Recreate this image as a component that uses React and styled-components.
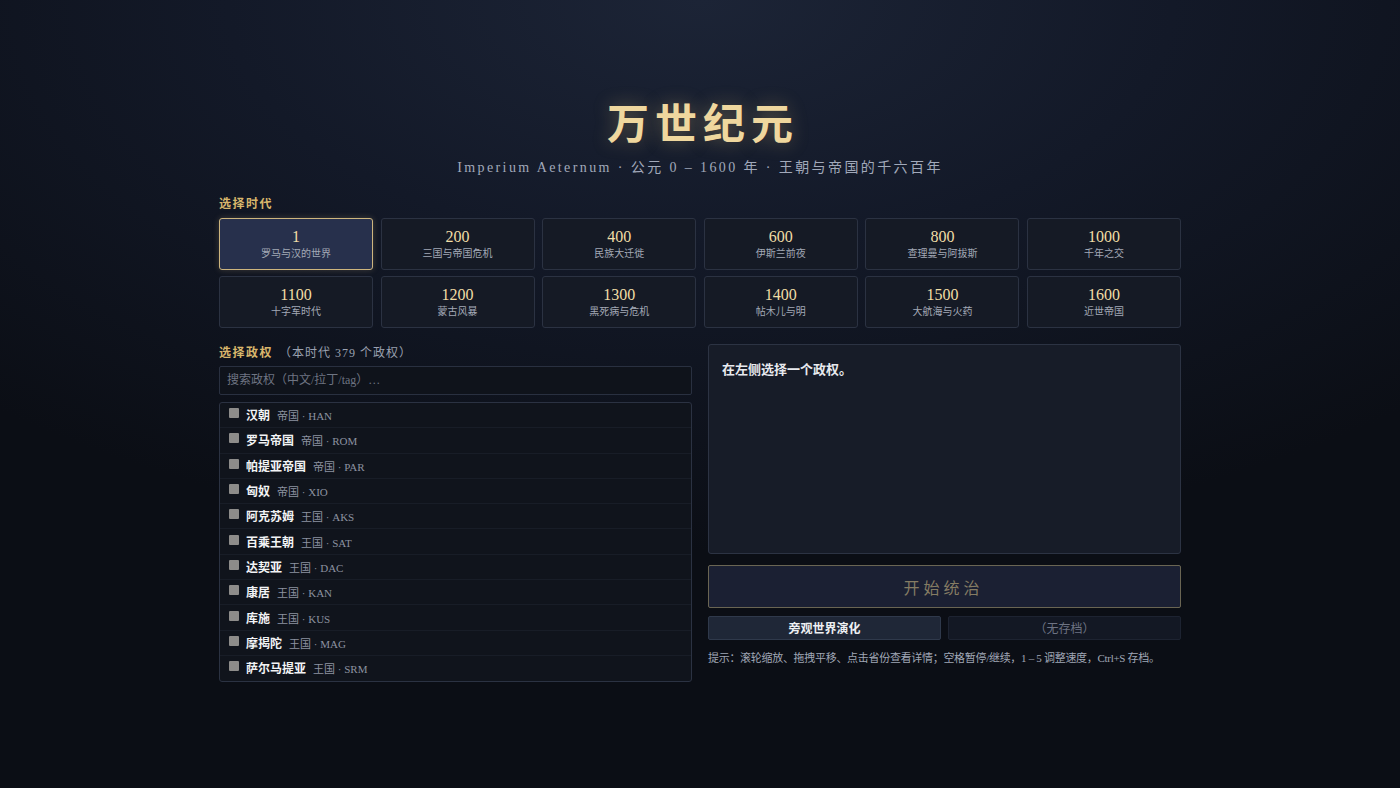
import React, { useState } from 'react';
import styled, { createGlobalStyle } from 'styled-components';

const GlobalStyle = createGlobalStyle`
  html, body {
    margin: 0;
    padding: 0;
    background: #0b0e15;
  }
  body {
    font-family: "Liberation Serif", "Noto Sans CJK SC", serif;
    color: #e6e8ee;
  }
  * {
    box-sizing: border-box;
  }
`;

const Page = styled.div`
  min-height: 788px;
  background: radial-gradient(ellipse 75% 70% at 50% 0%, #1c2436 0%, #131928 45%, #0b0e15 100%);
  display: flex;
  justify-content: center;
  padding-top: 100px;
`;

const Main = styled.div`
  width: 962px;
  display: flex;
  flex-direction: column;
`;

const Header = styled.header`
  text-align: center;
  margin-bottom: 18px;
`;

const Title = styled.h1`
  margin: 0;
  font-size: 42px;
  line-height: 50px;
  font-weight: 700;
  letter-spacing: 6px;
  padding-left: 6px;
  color: #efd79e;
  text-shadow: 0 0 18px rgba(236, 200, 120, 0.35);
`;

const Subtitle = styled.p`
  margin: 8px 0 0;
  font-size: 14px;
  line-height: 20px;
  letter-spacing: 2.4px;
  color: #a1a9ba;
`;

const SectionLabel = styled.div`
  font-size: 12px;
  line-height: 16px;
  letter-spacing: 1.5px;
  color: #d8b66c;
  font-weight: 700;
  margin-bottom: ${(p) => p.$gap || '6px'};
`;

const Muted = styled.span`
  color: #9aa1b0;
  font-weight: 400;
  margin-left: 6px;
  letter-spacing: 1px;
`;

const EraGrid = styled.div`
  display: grid;
  grid-template-columns: repeat(6, 1fr);
  gap: 6px 7.6px;
  margin-bottom: 16px;
`;

const EraCard = styled.button`
  height: 52px;
  border-radius: 3px;
  border: 1px solid ${(p) => (p.$active ? '#cdb57e' : '#2b3242')};
  background: ${(p) => (p.$active ? '#27304c' : '#151a25')};
  display: flex;
  flex-direction: column;
  align-items: center;
  justify-content: center;
  font-family: inherit;
  cursor: pointer;
  padding: 0;
  box-shadow: ${(p) => (p.$active ? '0 0 6px rgba(205,181,126,0.25)' : 'none')};
`;

const EraYear = styled.span`
  font-size: 16px;
  line-height: 19px;
  color: #f1dea6;
`;

const EraName = styled.span`
  font-size: 10px;
  line-height: 14px;
  color: #a3a9b6;
  margin-top: 1px;
`;

const Columns = styled.div`
  display: grid;
  grid-template-columns: 473px 473px;
  gap: 16px;
  align-items: start;
`;

const LeftCol = styled.div`
  display: flex;
  flex-direction: column;
  padding-top: 1px;
`;

const SearchInput = styled.input`
  height: 29px;
  width: 100%;
  background: #0f131b;
  border: 1px solid #293040;
  border-radius: 2px;
  padding: 0 7px;
  font-family: inherit;
  font-size: 12px;
  color: #d0d4dc;
  margin-bottom: 7px;
  outline: none;
  &::placeholder {
    color: #6e7482;
  }
`;

const List = styled.div`
  border: 1px solid #2b3242;
  border-radius: 3px;
  background: #10141c;
  overflow: hidden;
`;

const Row = styled.div`
  height: 25.3px;
  display: flex;
  align-items: center;
  padding-left: 9px;
  border-bottom: 1px solid ${(p) => (p.$last ? 'transparent' : '#181d27')};
`;

const Check = styled.span`
  width: 10px;
  height: 10px;
  background: #8d8c8a;
  border-radius: 1px;
  margin-right: 7px;
  margin-top: -4px;
`;

const PolityName = styled.span`
  font-size: 12px;
  font-weight: 700;
  color: #f2f3f5;
  margin-right: 7px;
`;

const PolityMeta = styled.span`
  font-size: 11px;
  color: #8c92a0;
`;

const RightCol = styled.div`
  display: flex;
  flex-direction: column;
`;

const DetailPanel = styled.div`
  height: 210px;
  background: #171c28;
  border: 1px solid #2c3343;
  border-radius: 3px;
  padding: 14px 13px;
  font-size: 13px;
  font-weight: 700;
  color: #e8eaef;
  margin-bottom: 11px;
`;

const StartButton = styled.button`
  height: 43px;
  background: #1b2033;
  border: 1px solid #6a6553;
  border-radius: 2px;
  font-family: inherit;
  font-size: 16px;
  letter-spacing: 4px;
  padding-left: 4px;
  color: #857c63;
  margin-bottom: 8px;
`;

const ButtonRow = styled.div`
  display: grid;
  grid-template-columns: 1fr 1fr;
  gap: 7px;
  margin-bottom: 10px;
`;

const SmallButton = styled.button`
  height: 24px;
  border-radius: 2px;
  font-family: inherit;
  font-size: 12px;
  font-weight: ${(p) => (p.$primary ? 700 : 400)};
  background: ${(p) => (p.$primary ? '#1f2737' : '#131824')};
  border: 1px solid ${(p) => (p.$primary ? '#2f394b' : '#1d2331')};
  color: ${(p) => (p.$primary ? '#eef0f3' : '#6d7383')};
`;

const Hint = styled.p`
  margin: 0;
  font-size: 11px;
  line-height: 16px;
  letter-spacing: -0.3px;
  color: #a0a7b6;
`;

const eras = [
  { year: 1, name: '罗马与汉的世界' },
  { year: 200, name: '三国与帝国危机' },
  { year: 400, name: '民族大迁徙' },
  { year: 600, name: '伊斯兰前夜' },
  { year: 800, name: '查理曼与阿拔斯' },
  { year: 1000, name: '千年之交' },
  { year: 1100, name: '十字军时代' },
  { year: 1200, name: '蒙古风暴' },
  { year: 1300, name: '黑死病与危机' },
  { year: 1400, name: '帖木儿与明' },
  { year: 1500, name: '大航海与火药' },
  { year: 1600, name: '近世帝国' },
];

const polities = [
  { name: '汉朝', type: '帝国', tag: 'HAN' },
  { name: '罗马帝国', type: '帝国', tag: 'ROM' },
  { name: '帕提亚帝国', type: '帝国', tag: 'PAR' },
  { name: '匈奴', type: '帝国', tag: 'XIO' },
  { name: '阿克苏姆', type: '王国', tag: 'AKS' },
  { name: '百乘王朝', type: '王国', tag: 'SAT' },
  { name: '达契亚', type: '王国', tag: 'DAC' },
  { name: '康居', type: '王国', tag: 'KAN' },
  { name: '库施', type: '王国', tag: 'KUS' },
  { name: '摩揭陀', type: '王国', tag: 'MAG' },
  { name: '萨尔马提亚', type: '王国', tag: 'SRM' },
];

export default function App() {
  const [era, setEra] = useState(1);

  return (
    <>
      <GlobalStyle />
      <Page>
        <Main>
          <Header>
            <Title>万世纪元</Title>
            <Subtitle>Imperium Aeternum · 公元 0 – 1600 年 · 王朝与帝国的千六百年</Subtitle>
          </Header>

          <SectionLabel>选择时代</SectionLabel>
          <EraGrid>
            {eras.map((e) => (
              <EraCard key={e.year} $active={e.year === era} onClick={() => setEra(e.year)}>
                <EraYear>{e.year}</EraYear>
                <EraName>{e.name}</EraName>
              </EraCard>
            ))}
          </EraGrid>

          <Columns>
            <LeftCol>
              <SectionLabel $gap="5px">
                选择政权<Muted>（本时代 379 个政权）</Muted>
              </SectionLabel>
              <SearchInput placeholder="搜索政权（中文/拉丁/tag）…" />
              <List>
                {polities.map((p, i) => (
                  <Row key={p.tag} $last={i === polities.length - 1}>
                    <Check />
                    <PolityName>{p.name}</PolityName>
                    <PolityMeta>
                      {p.type} · {p.tag}
                    </PolityMeta>
                  </Row>
                ))}
              </List>
            </LeftCol>

            <RightCol>
              <DetailPanel>在左侧选择一个政权。</DetailPanel>
              <StartButton disabled>开始统治</StartButton>
              <ButtonRow>
                <SmallButton $primary>旁观世界演化</SmallButton>
                <SmallButton disabled>（无存档）</SmallButton>
              </ButtonRow>
              <Hint>提示：滚轮缩放、拖拽平移、点击省份查看详情；空格暂停/继续，1 – 5 调整速度，Ctrl+S 存档。</Hint>
            </RightCol>
          </Columns>
        </Main>
      </Page>
    </>
  );
}
